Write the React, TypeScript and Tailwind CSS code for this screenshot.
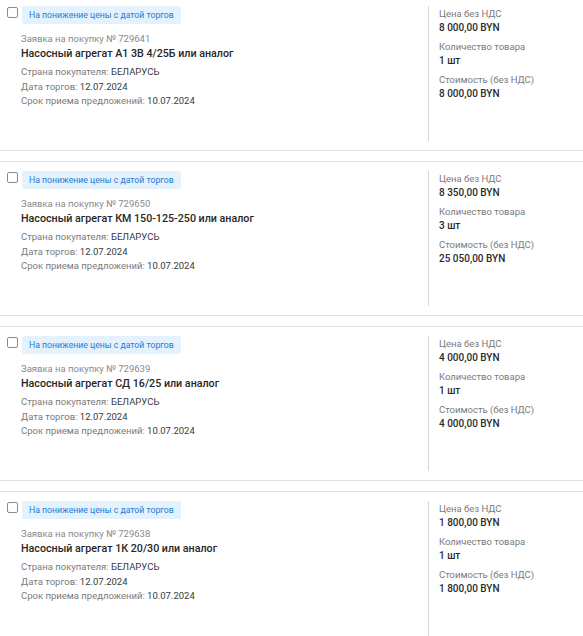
import React from "react";

type Lot = {
  id: string;
  title: string;
  price: string;
  qty: string;
  total: string;
};

const LOTS: Lot[] = [
  { id: "729641", title: "Насосный агрегат А1 3В 4/25Б или аналог", price: "8 000,00 BYN", qty: "1 шт", total: "8 000,00 BYN" },
  { id: "729650", title: "Насосный агрегат КМ 150-125-250 или аналог", price: "8 350,00 BYN", qty: "3 шт", total: "25 050,00 BYN" },
  { id: "729639", title: "Насосный агрегат СД 16/25 или аналог", price: "4 000,00 BYN", qty: "1 шт", total: "4 000,00 BYN" },
  { id: "729638", title: "Насосный агрегат 1К 20/30 или аналог", price: "1 800,00 BYN", qty: "1 шт", total: "1 800,00 BYN" },
];

function Field({ label, value }: { label: string; value: string }) {
  return (
    <div>
      <div className="text-[9.5px] leading-[15px] text-[#7a7a7a]">{label}</div>
      <div className="text-[10px] font-medium leading-[13px] text-[#2b2b2b]">{value}</div>
    </div>
  );
}

function LotCard({ lot }: { lot: Lot }) {
  return (
    <div className="flex h-[155px] border-y border-[#e0e0e0] bg-white">
      <div className="flex-1 pl-[7px] pt-[9px]">
        <div className="flex items-start gap-[4px]">
          <input
            type="checkbox"
            className="mt-[1px] h-[11px] w-[11px] appearance-none rounded-[2px] border border-[#8a8a8a] bg-white"
          />
          <span className="rounded-[2px] bg-[#e3f2fd] px-[7px] text-[8.7px] leading-[18px] text-[#1e7bd6]">
            На понижение цены с датой торгов
          </span>
        </div>
        <div className="pl-[14px]">
          <div className="mt-[7.5px] text-[9.5px] leading-[14px] text-[#8a8a8a]">Заявка на покупку № {lot.id}</div>
          <div className="text-[10.7px] font-medium leading-[15px] text-[#262626]">{lot.title}</div>
          <div className="mt-[4.5px] text-[9.5px] leading-[14.5px] text-[#7a7a7a]">
            <div>
              Страна покупателя: <span className="text-[#3a3a3a]">БЕЛАРУСЬ</span>
            </div>
            <div>
              Дата торгов: <span className="text-[#3a3a3a]">12.07.2024</span>
            </div>
            <div>
              Срок приема предложений: <span className="text-[#3a3a3a]">10.07.2024</span>
            </div>
          </div>
        </div>
      </div>
      <div className="my-[9px] w-[155px] border-l border-[#d6d6d6] pl-[10px]">
        <div className="flex flex-col gap-[5px]">
          <Field label="Цена без НДС" value={lot.price} />
          <Field label="Количество товара" value={lot.qty} />
          <Field label="Стоимость (без НДС)" value={lot.total} />
        </div>
      </div>
    </div>
  );
}

export default function App() {
  return (
    <div className="min-h-screen overflow-hidden bg-white font-['Roboto','Liberation_Sans',sans-serif]">
      <div className="-mt-[4px] flex flex-col gap-[10px]">
        {LOTS.map((lot) => (
          <LotCard key={lot.id} lot={lot} />
        ))}
      </div>
    </div>
  );
}
